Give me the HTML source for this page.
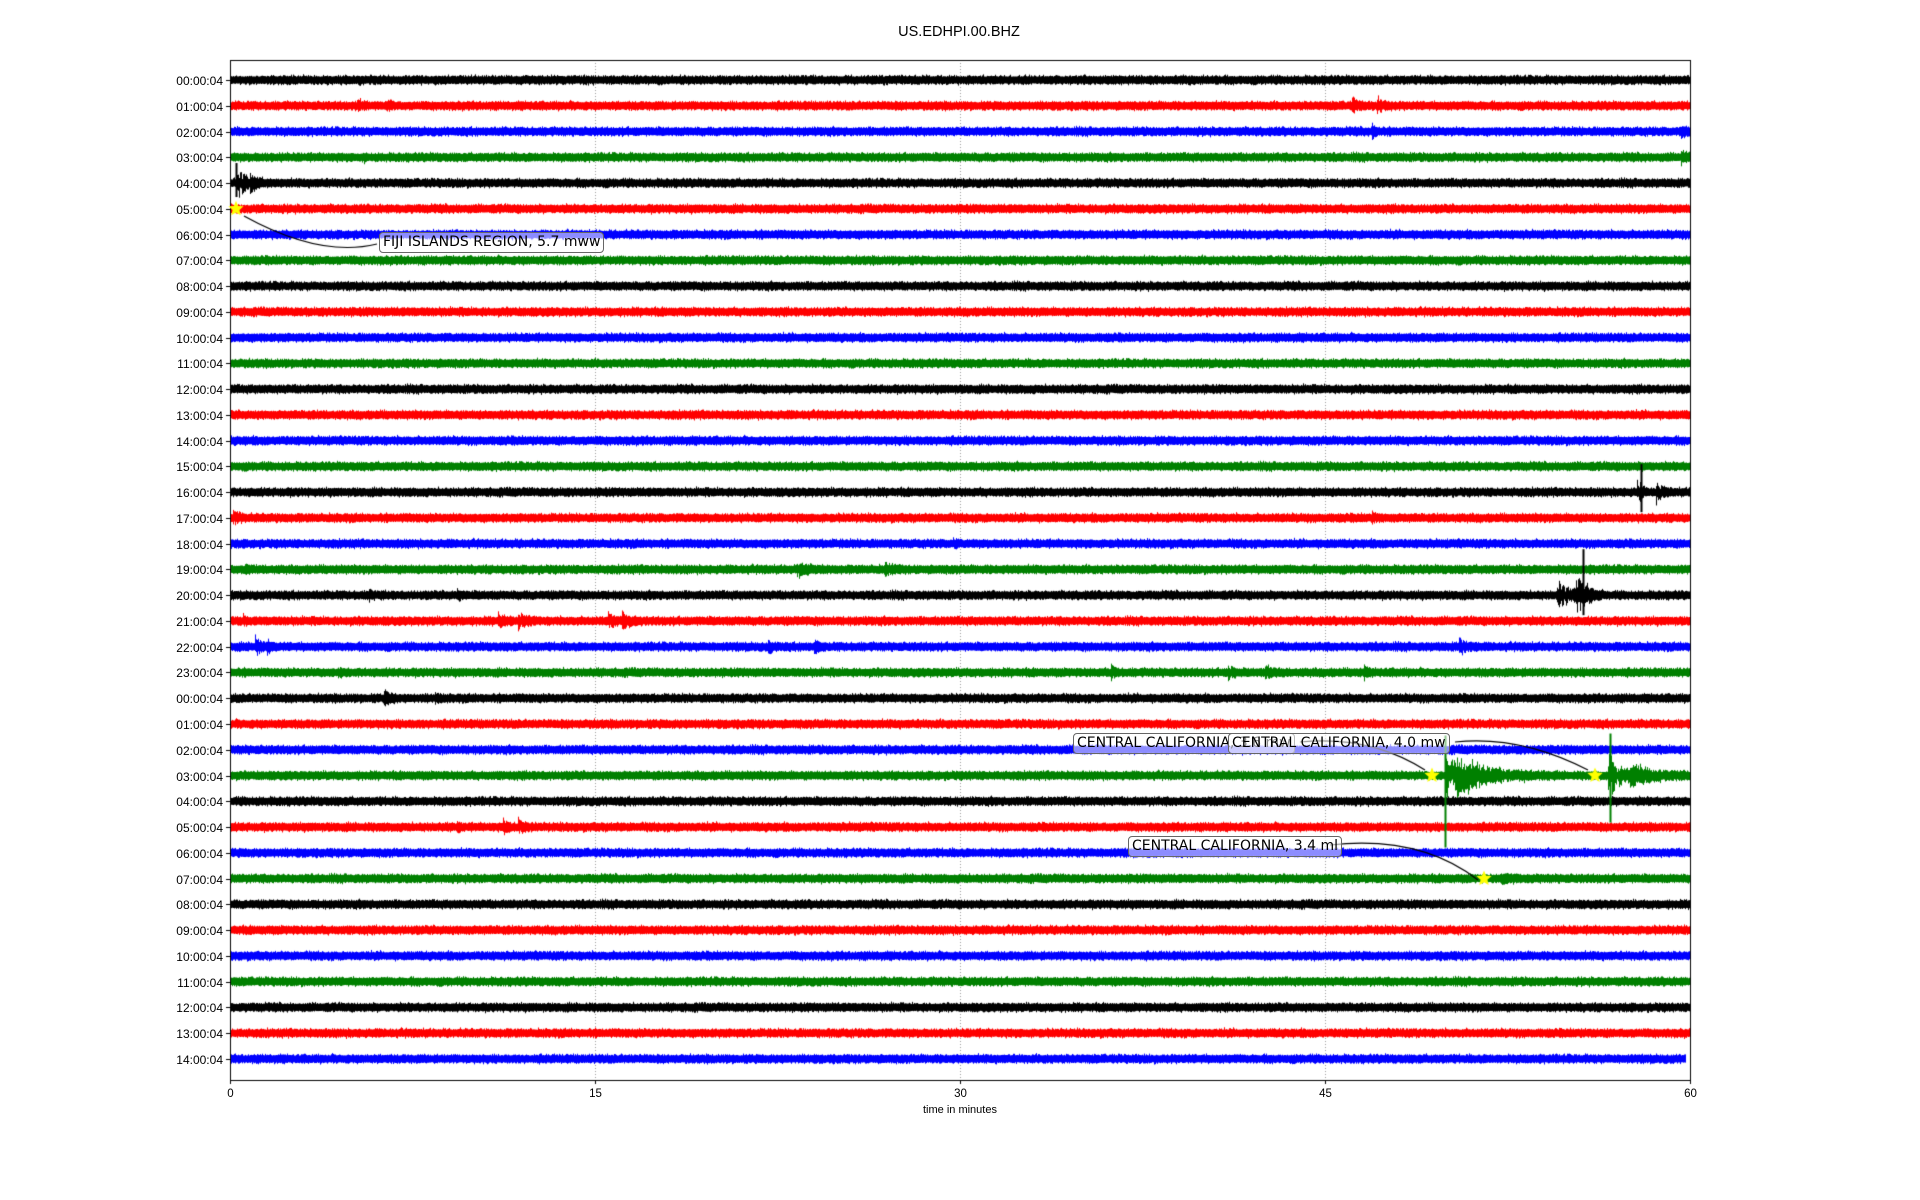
<!DOCTYPE html>
<html><head><meta charset="utf-8"><style>
html,body{margin:0;padding:0;background:#fff;width:1920px;height:1200px;overflow:hidden;font-family:"Liberation Sans","DejaVu Sans",sans-serif}
canvas{position:absolute;left:0;top:0}
.t{position:absolute;font-size:12px;color:#000;white-space:nowrap}
.box{position:absolute;font-size:14px;border:1.5px solid #666;border-radius:4px;background:rgba(255,255,255,0.55);padding:0 3px;line-height:19px;white-space:nowrap;font-family:"DejaVu Sans",sans-serif}
</style></head><body>
<canvas id="c" width="1920" height="1200"></canvas>
<div class="t" style="left:0;width:1918px;text-align:center;top:24px;font-size:14.5px">US.EDHPI.00.BHZ</div>
<div id="labels"></div>
<div class="t" style="left:910px;width:100px;text-align:center;top:1104px;font-size:11px">time in minutes</div>
<div class="box" style="left:379px;top:232px">FIJI ISLANDS REGION, 5.7 mww</div>
<div class="box" style="left:1073px;top:733px">CENTRAL CALIFORNIA, 3.6 mw</div>
<div class="box" style="left:1228px;top:733px">CENTRAL CALIFORNIA, 4.0 mw</div>
<div class="box" style="left:1128px;top:836px">CENTRAL CALIFORNIA, 3.4 ml</div>
<script>
var c=document.getElementById('c').getContext('2d');
var L=230,R=1690,T=60,B=1080,y0=80,dy=25.76;
function X(m){return L+m*(R-L)/60;}
var s=12345;function rnd(){s=(s*1103515245+12345)%2147483648;return s/2147483648;}
function g(){return (rnd()+rnd()+rnd()-1.5)*1.4;}
var cols=['#000','#f00','#00f','#008000'];
c.strokeStyle='#999';c.lineWidth=1;c.setLineDash([1,2]);
[15,30,45].forEach(function(m){var x=Math.round(X(m))+.5;c.beginPath();c.moveTo(x,T);c.lineTo(x,B);c.stroke();});
c.setLineDash([]);
var ev={1:[[5.2,6,12],[6.4,6,10],[46.1,7,15],[47.1,8,15]],2:[[46.9,8,8],[59.6,7,15]],3:[[5.5,5,5],[59.6,6,15]],4:[[0.25,18,20],[0.8,8,20]],
16:[[57.8,14,12],[58.6,10,15]],17:[[0.1,7,15],[46.9,4,10]],18:[[29.7,6,6]],19:[[0.6,4,10],[23.3,6,30],[26.9,5,20]],
20:[[5.7,5,8],[9.3,5,10],[54.5,14,40],[55.3,18,30]],21:[[0.5,5,8],[11,7,15],[11.8,9,20],[15.5,8,15],[16.1,9,20]],22:[[1,10,15],[1.5,7,10],[22.1,6,12],[24,6,12],[50.5,7,20]],
23:[[4.4,4,10],[36.2,6,10],[41,6,15],[42.5,6,20],[46.6,6,8]],24:[[6.3,8,15],[8.4,5,10]],29:[[9.3,5,8],[11.2,7,12],[11.8,9,15]],
27:[[49.9,22,60],[50.4,14,100],[56.6,22,40],[57.5,8,80]],31:[[52.2,3,40]]};
for(var i=0;i<39;i++){
 var y=y0+i*dy;c.strokeStyle=cols[i%4];c.beginPath();
 var end=(i==38)?1686:R;var e=ev[i];
 for(var x=L;x<end;x++){
  var a=3.3+Math.abs(g())*1.3;var a2=3.3+Math.abs(g())*1.3;
  if(e){for(var k=0;k<e.length;k++){var d=x-X(e[k][0]);if(d>=0&&d<e[k][2]){var amp=e[k][1]*Math.exp(-d/(e[k][2]/3));a+=amp*rnd();a2+=amp*rnd();}}}
  c.moveTo(x+.5,y-a);c.lineTo(x+.5,y+a2);
 }
 c.stroke();
}
function sp(col,m,row,up,dn){var y=y0+row*dy,x=Math.round(X(m))+.5;c.strokeStyle=col;c.lineWidth=2;c.beginPath();c.moveTo(x,y-up);c.lineTo(x,y+dn);c.stroke();c.lineWidth=1;}
sp('#008000',49.95,27,40,72);sp('#008000',56.7,27,42,47);
sp('#000',0.25,4,20,14);sp('#000',58,16,28,20);sp('#000',55.6,20,46,20);
c.strokeStyle='#000';c.lineWidth=1;c.strokeRect(L+.5,T+.5,R-L,B-T);
var lab=document.getElementById('labels'),h='';
for(var i=0;i<39;i++){var y=y0+i*dy;c.beginPath();c.moveTo(L-4,Math.round(y)+.5);c.lineTo(L,Math.round(y)+.5);c.stroke();
 var hr=(i%24);h+='<div class="t" style="left:140px;width:83px;text-align:right;top:'+(y-6)+'px">'+(hr<10?'0':'')+hr+':00:04</div>';}
[0,15,30,45,60].forEach(function(m){var x=Math.round(X(m))+.5;c.beginPath();c.moveTo(x,B);c.lineTo(x,B+4);c.stroke();
 h+='<div class="t" style="left:'+(x-20)+'px;width:40px;text-align:center;top:1088px;font-size:11.5px">'+m+'</div>';});
lab.innerHTML=h;
c.strokeStyle='#000';c.lineWidth=1.2;
function cur(a,b,cx,cy,d,e){c.beginPath();c.moveTo(a,b);c.quadraticCurveTo(cx,cy,d,e);c.stroke();}
cur(244,216,320,258,377,244);
cur(1425,770,1370,735,1300,742);
cur(1588,770,1520,735,1455,742);
cur(1478,880,1420,835,1330,845);
function star(x,y,r){c.fillStyle='#ff0';c.beginPath();for(var k=0;k<10;k++){var rr=k%2?r*0.45:r;var an=-Math.PI/2+k*Math.PI/5;c.lineTo(x+rr*Math.cos(an),y+rr*Math.sin(an));}c.fill();}
star(236,y0+5*dy,8);star(1432,y0+27*dy,8);star(1595,y0+27*dy,8);star(1484,y0+31*dy,8);
</script>
</body></html>
